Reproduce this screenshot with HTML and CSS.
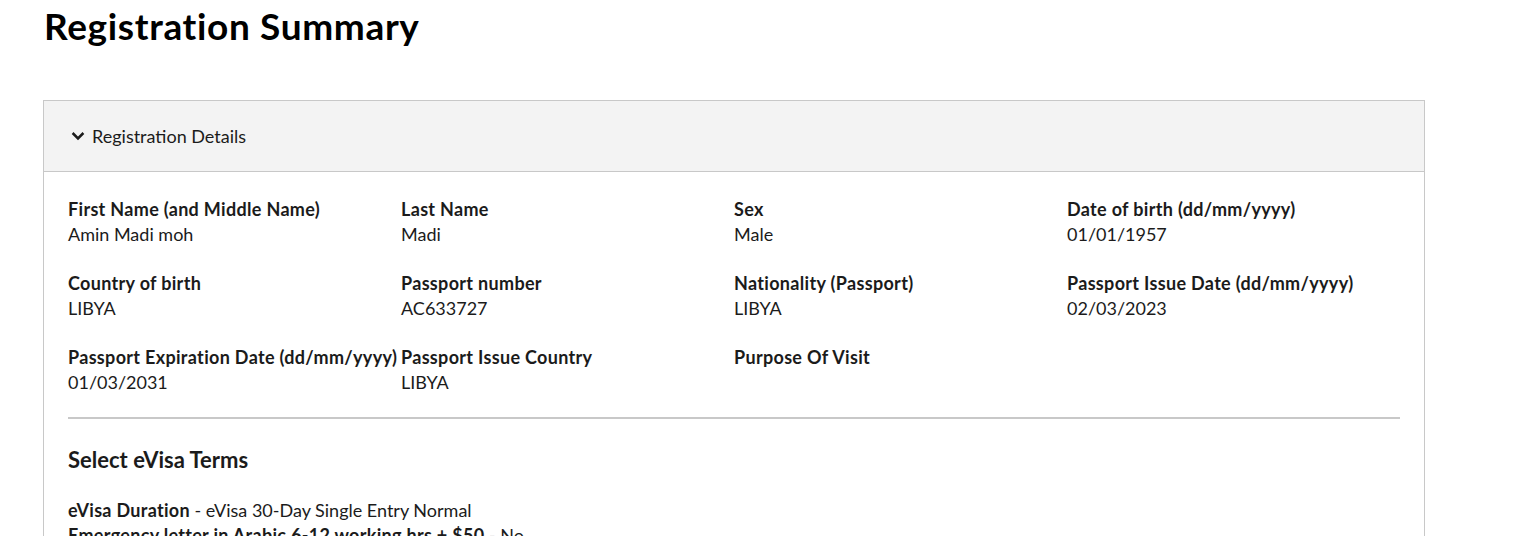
FILE: index.html
```html
<!DOCTYPE html>
<html lang="en">
<head>
<meta charset="utf-8">
<title>Registration Summary</title>
<link rel="stylesheet" href="styles.css">
</head>
<body>
<main class="page">
  <h1 class="title">Registration Summary</h1>
  <section class="panel">
    <div class="panel-head">
      <svg class="chev" width="14" height="10" viewBox="0 0 14 10" aria-hidden="true"><path d="M1.6 2 L7 7.4 L12.4 2" fill="none" stroke="#1b1b1b" stroke-width="2.5"/></svg>
      <span>Registration Details</span>
    </div>
    <div class="panel-body">
      <div class="grid">
        <div class="field"><div class="label">First Name (and Middle Name)</div><div class="value">Amin Madi moh</div></div>
        <div class="field"><div class="label">Last Name</div><div class="value">Madi</div></div>
        <div class="field"><div class="label">Sex</div><div class="value">Male</div></div>
        <div class="field"><div class="label">Date of birth (dd/mm/yyyy)</div><div class="value">01/01/1957</div></div>
        <div class="field"><div class="label">Country of birth</div><div class="value">LIBYA</div></div>
        <div class="field"><div class="label">Passport number</div><div class="value">AC633727</div></div>
        <div class="field"><div class="label">Nationality (Passport)</div><div class="value">LIBYA</div></div>
        <div class="field"><div class="label">Passport Issue Date (dd/mm/yyyy)</div><div class="value">02/03/2023</div></div>
        <div class="field"><div class="label">Passport Expiration Date (dd/mm/yyyy)</div><div class="value">01/03/2031</div></div>
        <div class="field"><div class="label">Passport Issue Country</div><div class="value">LIBYA</div></div>
        <div class="field"><div class="label">Purpose Of Visit</div><div class="value"></div></div>
      </div>
      <hr class="rule">
      <h2 class="subtitle">Select eVisa Terms</h2>
      <p class="term"><strong>eVisa Duration</strong> - eVisa 30-Day Single Entry Normal</p>
      <p class="term"><strong>Emergency letter in Arabic 6-12 working hrs + $50</strong> - No</p>
    </div>
  </section>
</main>
</body>
</html>
```
FILE: styles.css
```css
html, body {
  margin: 0;
  padding: 0;
  background: #fff;
}
body {
  font-family: Lato, "Liberation Sans", sans-serif;
  color: #1b1b1b;
  font-size: 18px;
  line-height: 25px;
}
.page {
  padding: 0 111px 0 43px;
}
.title {
  margin: 0;
  padding-top: 4px;
  padding-left: 1px;
  font-size: 37px;
  line-height: 44px;
  font-weight: 700;
  letter-spacing: 0.65px;
  color: #000;
}
.panel {
  margin-top: 52px;
  border: 1px solid #c8c8c8;
}
.panel-head {
  display: flex;
  align-items: center;
  gap: 7px;
  height: 70px;
  padding-left: 27px;
  background: #f3f3f3;
  border-bottom: 1px solid #c8c8c8;
}
.chev {
  display: block;
}
.panel-body {
  padding: 25px 24px 0 24px;
}
.grid {
  display: grid;
  grid-template-columns: repeat(4, 1fr);
  row-gap: 24px;
}
.label {
  font-weight: 700;
  letter-spacing: 0.32px;
  white-space: nowrap;
}
.value {
  min-height: 25px;
}
.rule {
  margin: 22px 0 0 0;
  border: 0;
  border-top: 2px solid #c8c8c8;
}
.subtitle {
  margin: 27px 0 0 0;
  font-size: 22px;
  line-height: 28px;
  font-weight: 700;
}
.term {
  margin: 0;
}
.term strong {
  letter-spacing: 0.3px;
}
.term:first-of-type {
  margin-top: 24px;
}
```
